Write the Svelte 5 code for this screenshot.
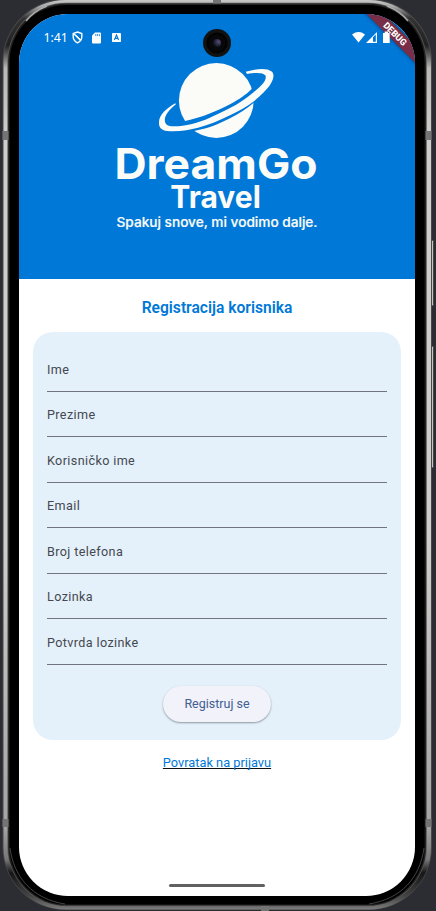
<script>
  const fields = ['Ime', 'Prezime', 'Korisničko ime', 'Email', 'Broj telefona', 'Lozinka', 'Potvrda lozinke'];
</script>

<div class="stage">
  <svg class="frame" width="436" height="911" viewBox="0 0 436 911" aria-hidden="true">
    <defs>
      <linearGradient id="metal" x1="0" y1="0" x2="0" y2="1">
        <stop offset="0" stop-color="#c9c8c7" />
        <stop offset=".007" stop-color="#a9a9a9" />
        <stop offset=".02" stop-color="#333" />
        <stop offset=".05" stop-color="#222" />
        <stop offset=".075" stop-color="#b9b8b5" />
        <stop offset=".15" stop-color="#cfcdca" />
        <stop offset=".6" stop-color="#cfcdca" />
        <stop offset=".91" stop-color="#a3a3a3" />
        <stop offset=".945" stop-color="#777" />
        <stop offset=".96" stop-color="#151515" />
        <stop offset=".985" stop-color="#444" />
        <stop offset="1" stop-color="#7b7b7b" />
      </linearGradient>
    </defs>
    <rect x="430.500" y="240" width="3" height="66" rx="1.5" fill="#c6c4c1" stroke="#444" />
    <rect x="430.500" y="346" width="3" height="122" rx="1.5" fill="#c6c4c1" stroke="#444" />
    <rect x="2.5" y="-1" width="429.5" height="911" rx="63" fill="#48484a" />
    <rect x="3.5" y="0" width="427.5" height="909.5" rx="62" fill="url(#metal)" />
    <rect x="7.4" y="2.8" width="419.4" height="903.4" rx="59" fill="#5a5a5a" />
    <rect x="8.2" y="3.6" width="417.800" height="902" rx="58" fill="#222" />
    <rect x="9.6" y="5" width="415" height="899.5" rx="57" fill="#000" />
    <path d="M26 21Q34 11 47 6M408 21Q400 11 387 6" fill="none" stroke="#aaa" stroke-width="1.5" />
    <path d="M10 848C14 878 33 899 65 904M424 848C420 878 401 899 369 904" fill="none" stroke="#555" stroke-width=".8" />
    <path d="M2.5 131h6v9h-6zM425.500 131h6v9h-6zM2.500 819h6v8h-6zM425.500 819h6v8h-6zM213 0h8v3.500h-8zM261 906h8v5h-8z" fill="#747474" />
  </svg>

  <main class="screen">
    <header>
      <div class="status">
        <span class="time">1:41</span>
        <svg class="shield" width="11" height="13" viewBox="0 0 11 13"><path d="M5.500 1 9.800 2.600V6.200Q9.500 9.800 5.500 11.800 1.500 9.800 1.200 6.200V2.600ZM1.600 2.500 9.200 10" fill="none" stroke="#fff" stroke-width="1.400" /><path d="M4.300 4.300 8 8" stroke="#fff" stroke-width="1" /></svg>
        <svg class="sd" width="9" height="12" viewBox="0 0 9 12"><path d="M3 .5H8Q9 .5 9 1.500V10.500Q9 11.500 8 11.500H1Q0 11.500 0 10.500V3.500Z" fill="#fff" /><path d="M3.800 2v2.200M5.600 2v2.200M7.400 2v2.200" stroke="#0078d8" stroke-width=".8" /></svg>
        <svg class="lang" width="9" height="9" viewBox="0 0 9 9"><rect width="9" height="9" rx=".8" fill="#fff" /><path d="M2.400 7 4.500 2 6.600 7M3.200 5.400H5.800" fill="none" stroke="#0078d8" stroke-width="1.100" /></svg>
        <span class="grow"></span>
        <svg width="38" height="13" viewBox="0 0 38 13"><path d="M0 3.500Q6.500-1.300 13 3.500L6.500 11.500Z" fill="#fff" /><path d="M14 12 25 1V12Z" fill="#fff" /><path d="M21 6.200 23.800 3.400V10.800H21Z" fill="#0078d8" /><path d="M31 2h1.700V.6h3.300V2H37.700V12H31Z" fill="#fff" /></svg>
      </div>
      <svg class="logo" width="204" height="174" viewBox="115 60 204 174" font-family="Inter, sans-serif" fill="#fbfcf7">
        <circle cx="216.300" cy="100.500" r="37.400" />
        <path d="M178 122.500 185 121C202 117.500 217 111 230 104.300 239 99.500 247 94 251.300 89.300L257 87 260 98 253.700 102.700C247 108.500 239 113.500 230 118.300 219 124 207 129 195 130.700L184 133Z" fill="#0078d8" />
        <path d="M175.300 103.300C166 108.500 159 115.500 159 122 158.600 128 162 131 170 131.200 180 131.700 190 129.800 198 127.700 209 124.800 219 120.700 230 115.300 239 111 247 106.500 253.300 101.700 260 96.300 267 89.300 270 85 274 79 274.500 74 271.700 71.500 267 67.800 257 68.300 245.700 71.800L247 74C257 72.400 263 72.500 265.500 75.500 267 80 262 85.500 253.300 92.500 247 98 239 103.500 230 107.900 215 115.400 204 121 192 124 180 126.800 169 127.300 166.500 124.500 162 119 167 111.500 175.900 104.300Z" />
        <text x="114.500" y="178.700" font-size="42.500" font-weight="700" textLength="203" lengthAdjust="spacingAndGlyphs">DreamGo</text>
        <text x="170.300" y="207.700" font-size="31" font-weight="700" textLength="90.500" lengthAdjust="spacingAndGlyphs">Travel</text>
        <text x="116.500" y="227" font-size="13" font-weight="500" stroke="#fbfcf7" stroke-width=".2" textLength="201" lengthAdjust="spacingAndGlyphs">Spakuj snove, mi vodimo dalje.</text>
      </svg>
    </header>
    <h1>Registracija korisnika</h1>
    <form>
      {#each fields as label}
        <div class="field">{label}</div>
      {/each}
      <button type="button">Registruj se</button>
    </form>
    <a href="#login">Povratak na prijavu</a>
    <div class="home"></div>
    <div class="ribbon">DEBUG</div>
  </main>
  <div class="camera"><i></i></div>
</div>

<style>
  :global(body) { margin: 0; background: #2c2d32; overflow: hidden; }
  .stage {
    position: relative;
    box-sizing: border-box;
    width: 436px;
    height: 911px;
    padding: 14px 21px 15px 19px;
    overflow: hidden;
    background: #2c2d32;
    font-family: Roboto, sans-serif;
  }
  .frame { position: absolute; inset: 0; }
  .screen {
    position: relative;
    display: flex;
    flex-direction: column;
    align-items: center;
    height: 882px;
    overflow: hidden;
    border-radius: 49px;
    background: #fff;
  }
  header {
    display: flex;
    flex-direction: column;
    align-items: center;
    width: 100%;
    height: 265px;
    flex: none;
    background: #0078d8;
  }
  .status {
    position: relative;
    z-index: 1;
    display: flex;
    align-items: center;
    box-sizing: border-box;
    width: 100%;
    height: 46px;
    padding: 1px 25px 0 24.500px;
    color: #fff;
  }
  .time { width: 23px; line-height: 16px; font-family: "Noto Sans", sans-serif; font-size: 12.300px; white-space: nowrap; }
  .shield { margin-left: 5.500px; }
  .sd { margin-left: 9px; }
  .lang { margin-left: 10.500px; }
  .grow { flex: 1; }
  .logo { flex: none; }
  h1 { margin: 19px 0 0; font-size: 15.600px; line-height: 20px; font-weight: 600; color: #0078d8; white-space: nowrap; }
  form {
    display: flex;
    flex-direction: column;
    box-sizing: border-box;
    width: 368px;
    height: 408px;
    margin-top: 14px;
    padding: 14px 14px 0;
    border-radius: 20px;
    background: #e4f1fb;
  }
  .field {
    box-sizing: border-box;
    height: 45.500px;
    padding: 15.700px 0 0;
    border-bottom: 1px solid #72757f;
    color: #45484f;
    font-size: 12.600px;
    line-height: 16px;
    letter-spacing: .38px;
  }
  button {
    align-self: center;
    width: 108px;
    height: 36px;
    margin-top: 21.500px;
    padding: 0;
    border: 0;
    border-radius: 18px;
    background: #f1f2fa;
    box-shadow: 0 1px 2px rgba(0, 0, 0, .38);
    color: #415f91;
    font: 400 12.500px/16px Roboto, sans-serif;
  }
  a {
    margin-top: 14px;
    color: #0078d8;
    font-size: 12.800px;
    line-height: 18px;
    text-decoration: underline #111;
    text-decoration-thickness: 1px;
    text-underline-offset: 1px;
    text-decoration-skip-ink: none;
    white-space: nowrap;
  }
  .home { width: 96px; height: 3px; margin: auto 0 9px; border-radius: 2px; background: #616161; }
  .ribbon {
    position: absolute;
    top: 14px;
    right: -29.500px;
    width: 100px;
    height: 12px;
    transform: rotate(45deg);
    background: #792d46;
    box-shadow: 0 0 4px rgba(0, 0, 0, .5);
    color: #fff;
    font-size: 9px;
    font-weight: 800;
    line-height: 12px;
    text-align: center;
  }
  .camera {
    position: absolute;
    left: 203px;
    top: 29px;
    display: grid;
    place-items: center;
    width: 28px;
    height: 28px;
    border-radius: 50%;
    background: radial-gradient(circle, #08080a 0 8px, #030303 8px 10px, #121212 11px);
  }
  .camera i { width: 8px; height: 8px; border-radius: 50%; background: radial-gradient(circle at 70% 35%, #68477c, #202a40 45%, #0b0d12 80%); }
</style>
